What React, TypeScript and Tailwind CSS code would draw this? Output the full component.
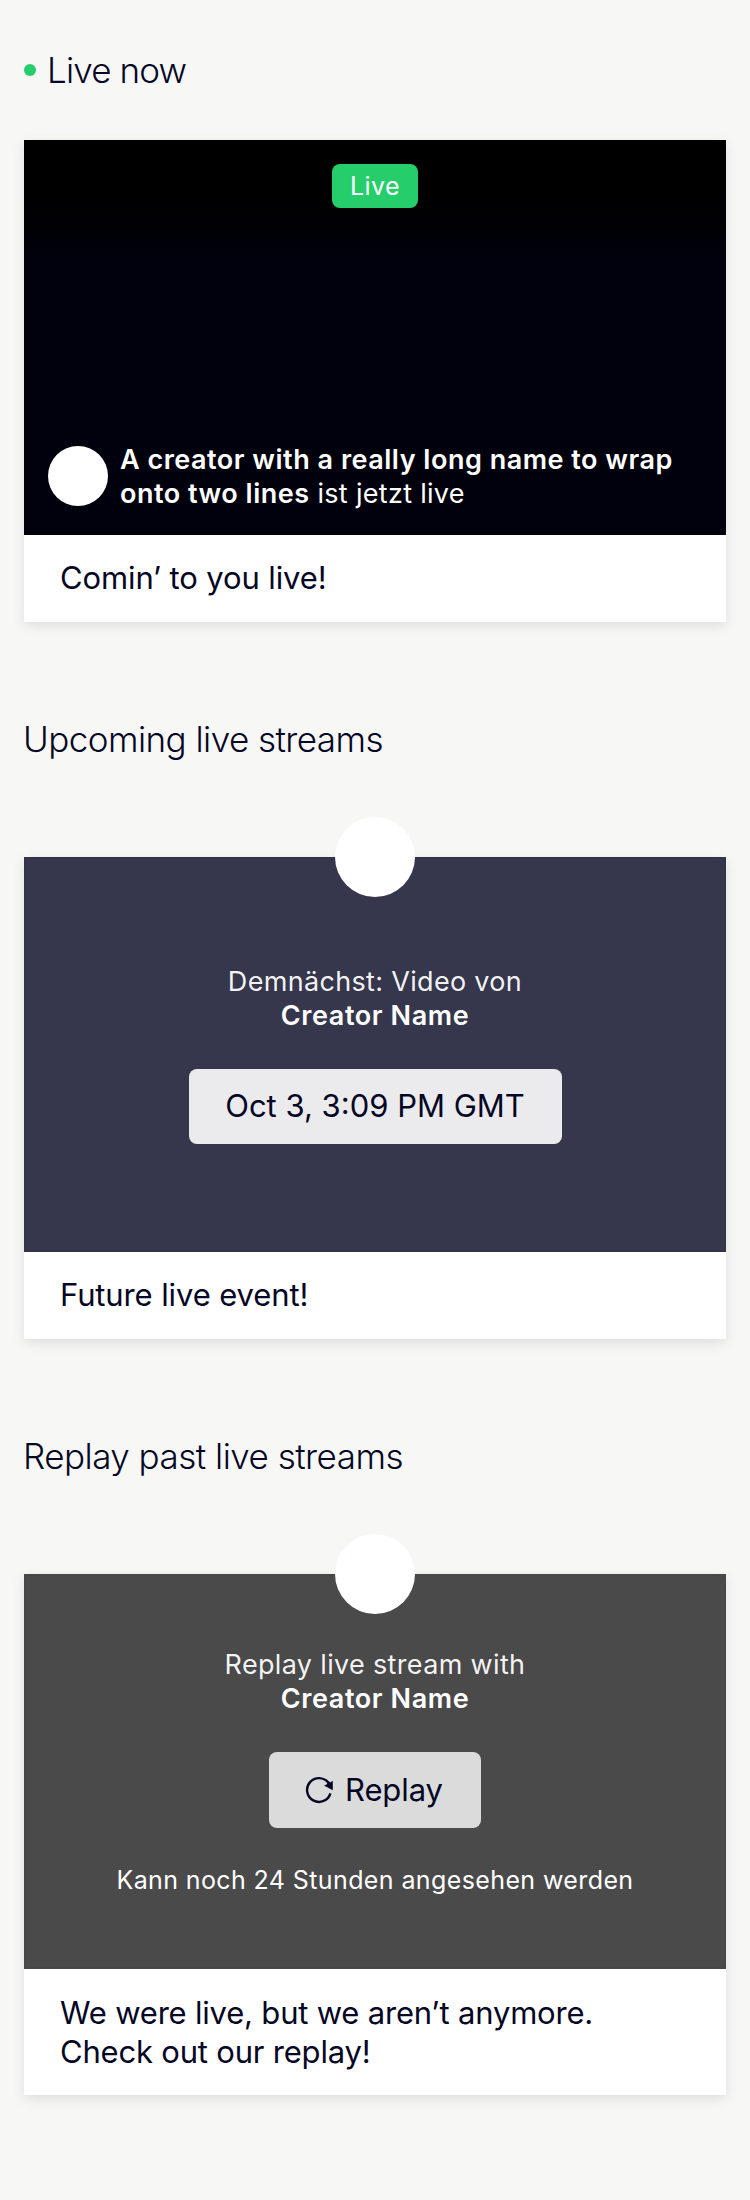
import type { ReactNode } from "react";

function ReplayIcon() {
  return (
    <svg viewBox="-14 -14 28 28" className="size-7 shrink-0" fill="none">
      <path d="M11.4 3.3A11.9 11.9 0 1 1 9.6 -7" stroke="currentColor" strokeWidth="2.4" />
      <path d="M13.8 -9.2 11.2 -7.4 9.6 -9 7.6 -5.6 5 -4.4 13.8 0.2Z" fill="currentColor" />
    </svg>
  );
}

function Heading({ children }: { children: ReactNode }) {
  return <h2 className="flex h-11 items-center text-[35px] leading-11 font-light">{children}</h2>;
}

function Card({ media, caption }: { media: ReactNode; caption: ReactNode }) {
  return (
    <article className="bg-white shadow-[0_4px_12px_rgba(5,8,40,0.1)]">
      {media}
      <div className="px-9 pt-[23px] pb-[25px] text-[31px] leading-[39px] tracking-[-0.12px]">{caption}</div>
    </article>
  );
}

function FloatingAvatar() {
  return <div className="absolute -top-[42px] left-1/2 size-20 -translate-x-1/2 rounded-full bg-white" />;
}

export default function App() {
  return (
    <main className="min-h-[2200px] w-[750px] bg-[#f7f7f5] px-6 pt-12 font-['Inter',sans-serif] text-[#050724]">
      <section>
        <Heading>
          <span className="mr-[11px] size-3 rounded-full bg-[#25ce6b]" />
          <span className="tracking-[-0.85px]">Live now</span>
        </Heading>
        <div className="mt-12">
          <Card
            media={
              <div className="flex h-[395px] flex-col items-center justify-between bg-linear-to-b from-black to-[#01010d] to-30% px-6 pt-6 pb-[26px] text-white">
                <span className="flex h-11 w-[86px] items-center justify-center rounded-lg bg-[#25ce6b] pt-0.5 text-[25px] tracking-[0.4px]">
                  Live
                </span>
                <div className="flex w-full items-center">
                  <div className="mr-3 size-15 shrink-0 rounded-full bg-white" />
                  <p className="-mb-0.5 text-[27px] leading-[34px] tracking-[0.3px]">
                    <strong className="font-semibold tracking-[0.51px]">
                      A creator with a really long name to wrap
                      <br />
                      onto two lines
                    </strong>{" "}
                    ist jetzt live
                  </p>
                </div>
              </div>
            }
            caption="Comin’ to you live!"
          />
        </div>
      </section>

      <section className="mt-[95px]">
        <Heading>
          <span className="-ml-px tracking-[-0.55px]">Upcoming live streams</span>
        </Heading>
        <div className="mt-24">
          <Card
            media={
              <div className="relative flex h-[395px] flex-col items-center border-2 border-[#33344a] bg-[#36374c] pt-[106px] text-center text-white">
                <FloatingAvatar />
                <p className="text-[27px] leading-[34px]">
                  <span className="tracking-[0.32px] text-white/95">Demnächst: Video von</span>
                  <br />
                  <strong className="font-semibold tracking-[0.6px]">Creator Name</strong>
                </p>
                <div className="mt-9 flex h-[75px] w-[373px] items-center justify-center rounded-lg bg-[#ebebed] text-[31px] text-[#050724]">
                  Oct 3, 3:09 PM GMT
                </div>
              </div>
            }
            caption="Future live event!"
          />
        </div>
      </section>

      <section className="mt-[95px]">
        <Heading>
          <span className="-ml-px tracking-[-0.52px]">Replay past live streams</span>
        </Heading>
        <div className="mt-24">
          <Card
            media={
              <div className="relative flex h-[395px] flex-col items-center border-2 border-[#474747] bg-[#4a4a4a] pt-[72px] text-center text-white">
                <FloatingAvatar />
                <p className="text-[27px] leading-[34px]">
                  <span className="tracking-[0.34px] text-white/95">Replay live stream with</span>
                  <br />
                  <strong className="font-semibold tracking-[0.6px]">Creator Name</strong>
                </p>
                <button className="mt-9 flex h-19 w-[212px] items-center gap-3 rounded-lg bg-[#dbdbdb] pl-9 text-[31px] tracking-[-0.1px] text-[#050724]">
                  <ReplayIcon />
                  Replay
                </button>
                <p className="mt-[35px] text-[25px] leading-[34px] tracking-[0.39px]">
                  Kann noch 24 Stunden angesehen werden
                </p>
              </div>
            }
            caption={
              <p className="-mb-px pt-px tracking-[-0.2px]">
                We were live, but we aren’t anymore.
                <br />
                Check out our replay!
              </p>
            }
          />
        </div>
      </section>
    </main>
  );
}
